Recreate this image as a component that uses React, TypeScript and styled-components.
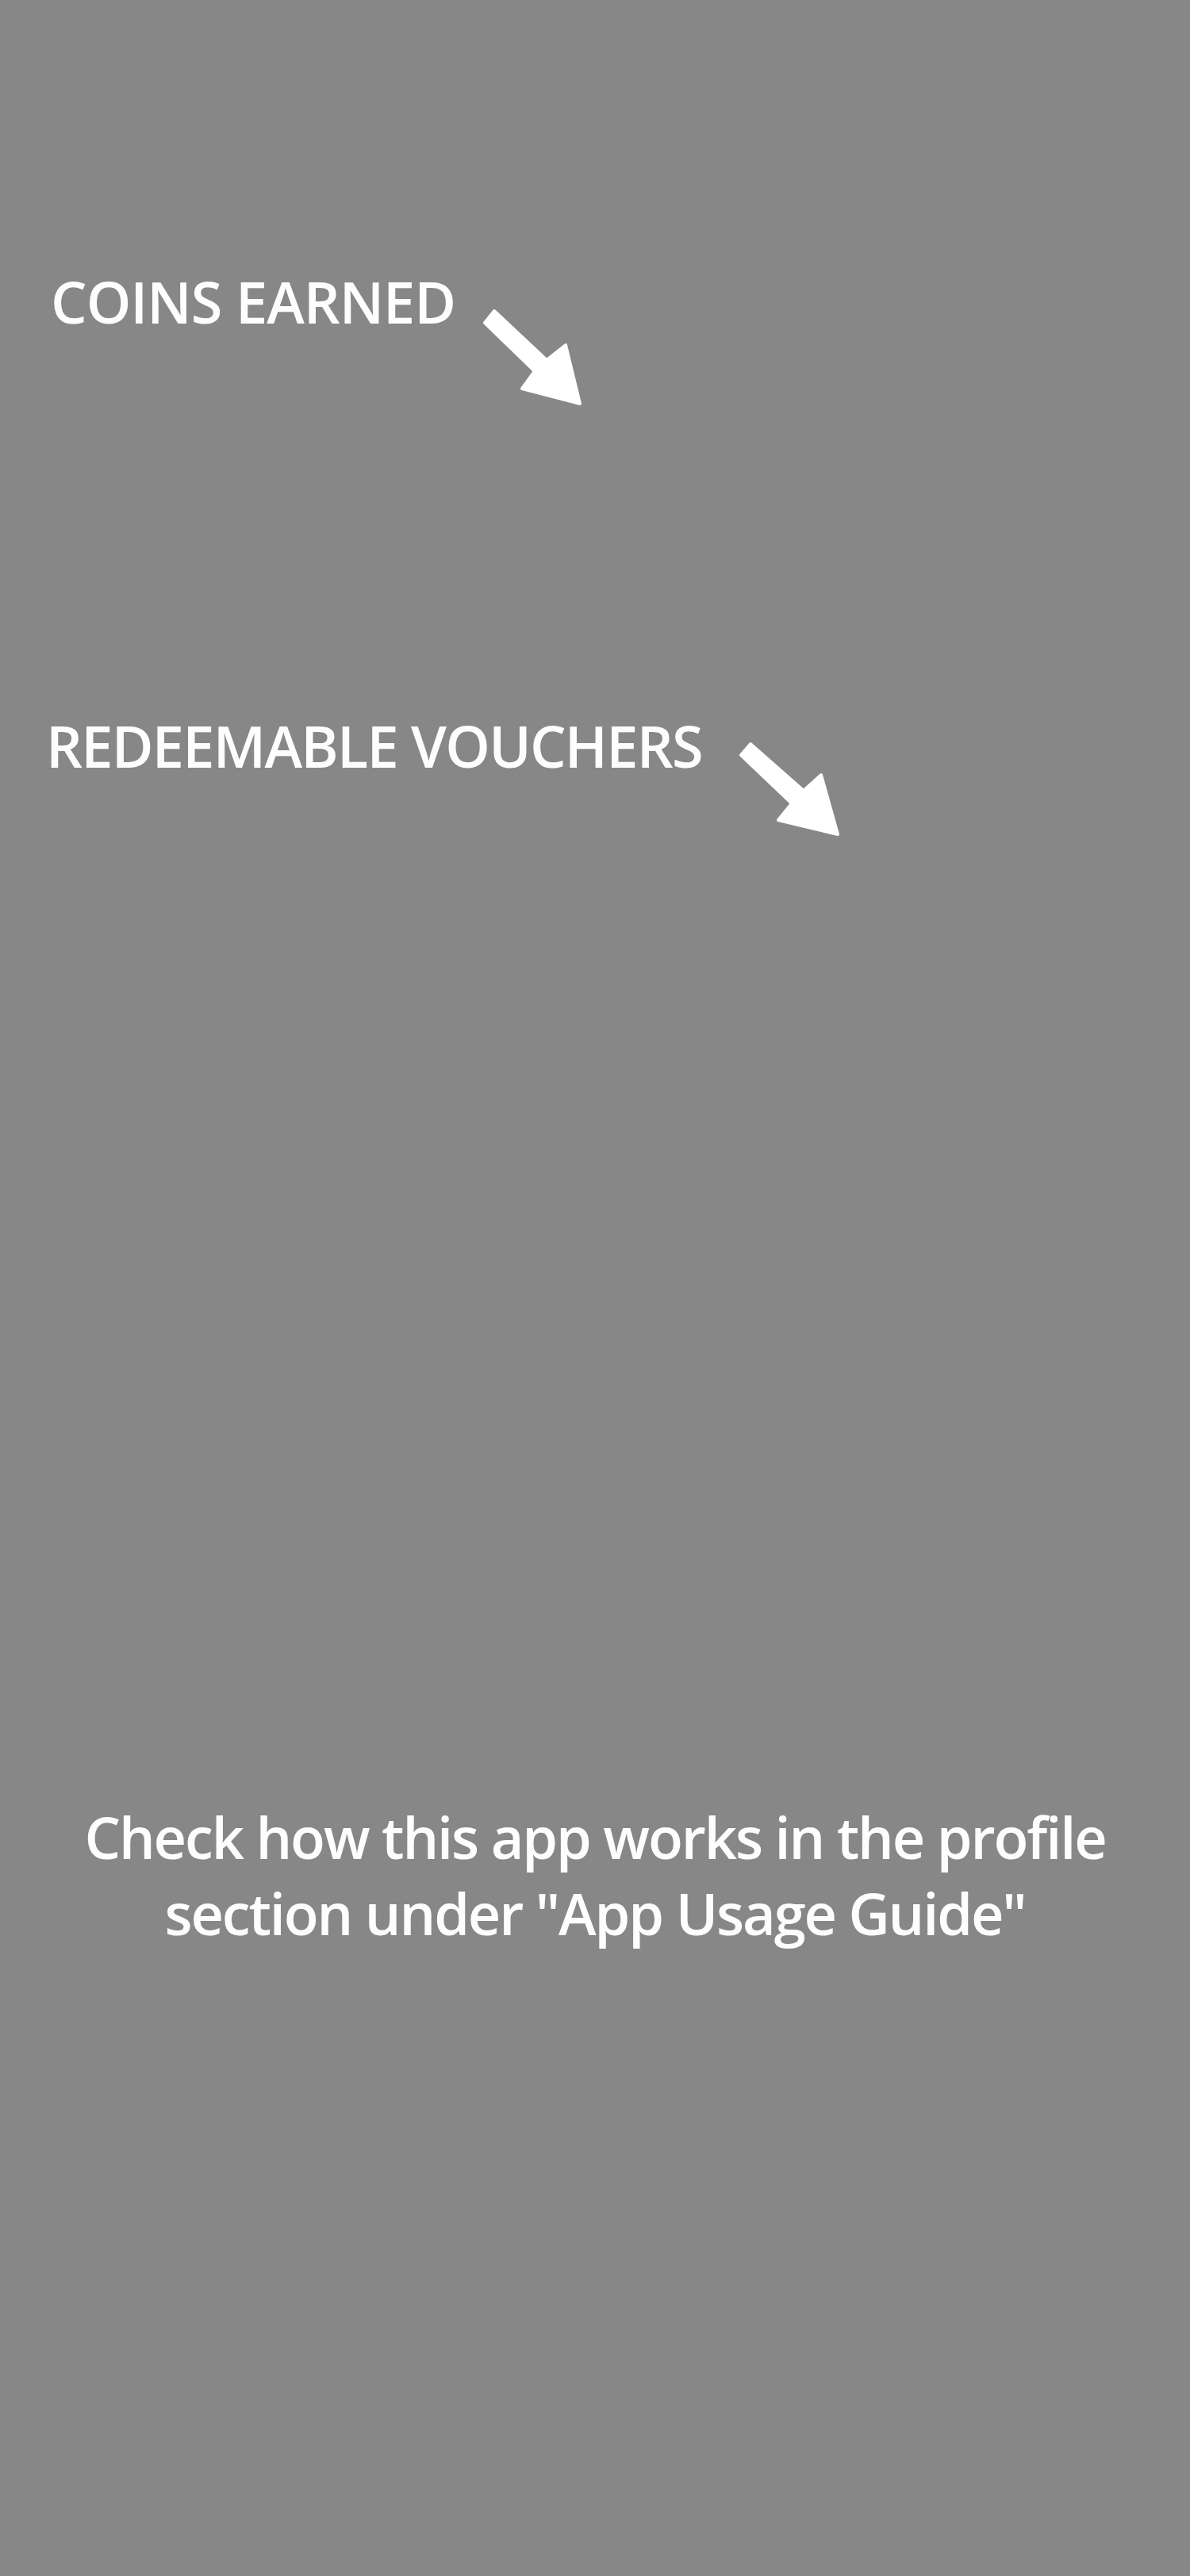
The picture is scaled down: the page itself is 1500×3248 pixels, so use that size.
import React from "react";
import styled, { createGlobalStyle } from "styled-components";

const Global = createGlobalStyle`
  html, body { margin: 0; padding: 0; background: #878787; }
  * { box-sizing: border-box; }
`;

const Page = styled.main`
  width: 1500px;
  height: 3248px;
  background: #878787;
  color: #fffcfc;
  font-family: "Open Sans", "Noto Sans", sans-serif;
  font-weight: 600;
  display: flex;
  flex-direction: column;
  padding-top: 344px;
  overflow: hidden;
`;

const Callout = styled.section<{ $left: number; $labelWidth: number; $arrowTop: number; $gapBefore: number }>`
  display: grid;
  grid-template-columns: ${(p) => p.$labelWidth}px 140px;
  padding-left: ${(p) => p.$left}px;
  margin-top: ${(p) => p.$gapBefore}px;
  align-items: start;

  & > svg {
    margin-top: ${(p) => p.$arrowTop}px;
    display: block;
  }
`;

const Label = styled.h2<{ $tracking: number }>`
  margin: 0;
  font-size: 72px;
  line-height: 72px;
  font-weight: 600;
  white-space: nowrap;
  letter-spacing: ${(p) => p.$tracking}px;
`;

const Note = styled.p`
  margin: 1198px 0 0;
  text-align: center;
  font-size: 72px;
  line-height: 96px;
  font-weight: 600;
  letter-spacing: -2.1px;
`;

type ArrowProps = { points: string };

const Arrow = ({ points }: ArrowProps) => (
  <svg width="140" height="140" viewBox="0 0 140 140">
    <polygon points={points} fill="#ffffff" stroke="#ffffff" strokeWidth="4" strokeLinejoin="round" />
  </svg>
);

export default function App() {
  return (
    <>
      <Global />
      <Page>
        <Callout $left={64} $labelWidth={536} $arrowTop={36} $gapBefore={0}>
          <Label $tracking={-1}>COINS EARNED</Label>
          <Arrow points="11,27 23,12 89,74 113,55 131,129 58,110 74,88" />
        </Callout>
        <Callout $left={58} $labelWidth={867} $arrowTop={26} $gapBefore={384}>
          <Label $tracking={-1.7}>REDEEMABLE VOUCHERS</Label>
          <Arrow points="9,22 21,8 88,67 110,47 131,122 56,104 73,83" />
        </Callout>
        <Note>
          Check how this app works in the profile
          <br />
          section under "App Usage Guide"
        </Note>
      </Page>
    </>
  );
}
